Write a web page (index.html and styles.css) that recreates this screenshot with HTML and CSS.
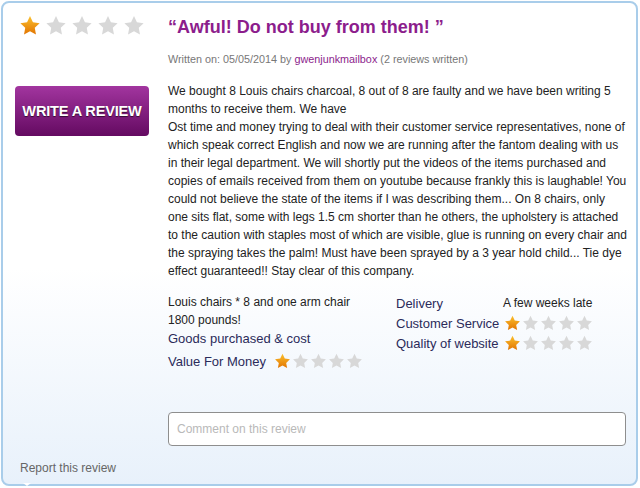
FILE: index.html
```html
<!DOCTYPE html>
<html>
<head>
<meta charset="utf-8">
<link rel="stylesheet" href="styles.css">
</head>
<body>
<svg class="defs" width="0" height="0" aria-hidden="true">
  <defs>
    <linearGradient id="gold" x1="0" y1="0" x2="0" y2="1">
      <stop offset="0" stop-color="#fbc02d"/>
      <stop offset="1" stop-color="#e27400"/>
    </linearGradient>
    <symbol id="star" viewBox="0 0 24 24">
      <path d="M12 1.2l3.2 6.7 7.3 1-5.3 5.1 1.3 7.3L12 17.8l-6.5 3.5 1.3-7.3L1.5 8.9l7.3-1z"/>
    </symbol>
  </defs>
</svg>
<div class="card">
  <div class="main">
    <div class="side">
      <div class="stars big">
        <svg class="on"><use href="#star"/></svg>
        <svg class="off"><use href="#star"/></svg>
        <svg class="off"><use href="#star"/></svg>
        <svg class="off"><use href="#star"/></svg>
        <svg class="off"><use href="#star"/></svg>
      </div>
      <a class="write-btn">WRITE A REVIEW</a>
    </div>
    <div class="content">
      <h1 class="title">“Awful! Do not buy from them! ”</h1>
      <p class="meta">Written on: 05/05/2014 by <a class="user">gwenjunkmailbox</a> (2 reviews written)</p>
      <p class="body">We bought 8 Louis chairs charcoal, 8 out of 8 are faulty and we have been writing 5 months to receive them. We have<br>Ost time and money trying to deal with their customer service representatives, none of which speak correct English and now we are running after the fantom dealing with us in their legal department. We will shortly put the videos of the items purchased and copies of emails received from them on youtube because frankly this is laughable! You could not believe the state of the items if I was describing them... On 8 chairs, only one sits flat, some with legs 1.5 cm shorter than he others, the upholstery is attached to the caution with staples most of which are visible, glue is running on every chair and the spraying takes the palm! Must have been sprayed by a 3 year hold child... Tie dye effect guaranteed!! Stay clear of this company.</p>
      <div class="details">
        <div class="goods">
          <div class="val">Louis chairs * 8 and one arm chair</div>
          <div class="val">1800 pounds!</div>
          <div class="lbl goods-lbl">Goods purchased &amp; cost</div>
          <div class="rate-row">
            <span class="lbl">Value For Money</span>
            <span class="stars small">
              <svg class="on"><use href="#star"/></svg>
              <svg class="off"><use href="#star"/></svg>
              <svg class="off"><use href="#star"/></svg>
              <svg class="off"><use href="#star"/></svg>
              <svg class="off"><use href="#star"/></svg>
            </span>
          </div>
        </div>
        <div class="ratings">
          <span class="lbl">Delivery</span>
          <span class="val">A few weeks late</span>
          <span class="lbl">Customer Service</span>
          <span class="stars small">
            <svg class="on"><use href="#star"/></svg>
            <svg class="off"><use href="#star"/></svg>
            <svg class="off"><use href="#star"/></svg>
            <svg class="off"><use href="#star"/></svg>
            <svg class="off"><use href="#star"/></svg>
          </span>
          <span class="lbl">Quality of website</span>
          <span class="stars small">
            <svg class="on"><use href="#star"/></svg>
            <svg class="off"><use href="#star"/></svg>
            <svg class="off"><use href="#star"/></svg>
            <svg class="off"><use href="#star"/></svg>
            <svg class="off"><use href="#star"/></svg>
          </span>
        </div>
      </div>
      <div class="comment">Comment on this review</div>
    </div>
  </div>
  <div class="footer"><a class="report">Report this review</a></div>
</div>
</body>
</html>
```
FILE: styles.css
```css
html, body {
  margin: 0;
  padding: 0;
  background: #fff;
}
body {
  font-family: "Liberation Sans", Arial, sans-serif;
  color: #222;
}
.defs {
  position: absolute;
  width: 0;
  height: 0;
}
.card {
  position: relative;
  box-sizing: border-box;
  margin: 1px 2px 0 1px;
  height: 485px;
  border: 2px solid #a9cdea;
  border-radius: 8px;
  background: linear-gradient(#ffffff 0%, #ffffff 55%, #e8f1fb 100%);
  display: flex;
  flex-direction: column;
}
.card::before {
  content: "";
  position: absolute;
  left: 17px;
  bottom: -6px;
  width: 0;
  height: 0;
  border-left: 7px solid transparent;
  border-right: 7px solid transparent;
  border-top: 6px solid #a9cdea;
}
.card::after {
  content: "";
  position: absolute;
  left: 20px;
  bottom: -2px;
  width: 0;
  height: 0;
  border-left: 4px solid transparent;
  border-right: 4px solid transparent;
  border-top: 3px solid #ffffff;
}
.main {
  display: flex;
}
.side {
  width: 165px;
  flex: none;
  display: flex;
  flex-direction: column;
}
.stars {
  display: flex;
}
.stars svg {
  display: block;
}
.stars .on { fill: url(#gold); }
.stars .off { fill: #d8d8d8; }
.stars.big {
  margin: 12px 0 0 16px;
  gap: 4px;
}
.stars.big svg {
  width: 22px;
  height: 22px;
}
.stars.small {
  gap: 1px;
}
.stars.small svg {
  width: 17px;
  height: 17px;
}
.write-btn {
  margin: 49px 0 0 12px;
  width: 134px;
  height: 50px;
  border-radius: 4px;
  background: linear-gradient(#a2359f, #640a61);
  color: #fff;
  font-weight: bold;
  font-size: 14.6px;
  display: flex;
  align-items: center;
  justify-content: center;
  text-shadow: 0 1px 1px rgba(0, 0, 0, 0.6);
  letter-spacing: -0.2px;
}
.content {
  width: 460px;
  padding-top: 12px;
}
.title {
  margin: 0;
  font-size: 18px;
  line-height: 24px;
  font-weight: bold;
  color: #8c1d8c;
}
.meta {
  margin: 13px 0 0;
  font-size: 10.8px;
  line-height: 14px;
  color: #777;
}
.user {
  color: #8c1d8c;
}
.body {
  margin: 16px 0 0;
  font-size: 12px;
  line-height: 18px;
  color: #222;
}
.details {
  margin-top: 13px;
  display: flex;
}
.goods {
  width: 228px;
  flex: none;
}
.val {
  font-size: 12px;
  line-height: 18px;
  color: #222;
}
.lbl {
  font-size: 13px;
  color: #2b2b5a;
}
.goods-lbl {
  display: block;
  line-height: 20px;
}
.rate-row {
  margin-top: 2px;
  display: flex;
  align-items: center;
  gap: 8px;
  height: 20px;
}
.ratings {
  display: grid;
  grid-template-columns: 107px auto;
  grid-auto-rows: 20px;
  align-items: center;
}
.ratings .val {
  line-height: 20px;
}
.ratings .stars {
  margin-left: 1px;
}
.comment {
  margin-top: 41px;
  box-sizing: border-box;
  width: 458px;
  height: 34px;
  border: 1px solid #8e8e8e;
  border-radius: 4px;
  background: #fff;
  padding: 0 8px;
  font-size: 12px;
  line-height: 32px;
  color: #b9b9b9;
}
.footer {
  padding: 12px 0 0 17px;
}
.report {
  font-size: 12px;
  line-height: 14px;
  color: #666;
}
```
